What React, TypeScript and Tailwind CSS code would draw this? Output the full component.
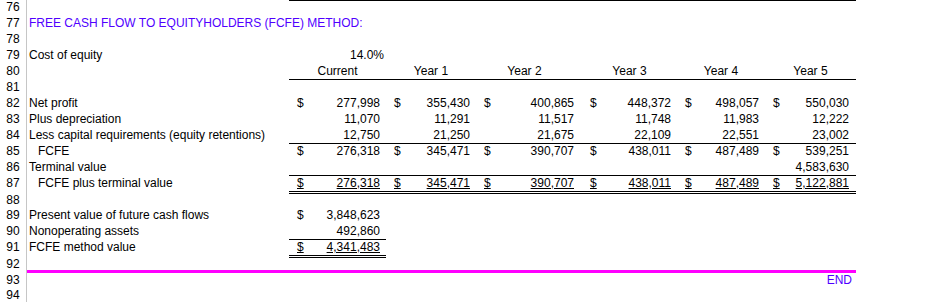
import clsx from "clsx";
import type { ReactNode } from "react";

// Sheet grid: row header | label | Current | Year 1..5 | rest
const GRID =
  "grid grid-cols-[27px_262px_97px_90px_106px_95px_88px_91px_1fr] leading-[15px]";

// right padding of the numbers in each value column
const PAD = ["pr-[6px]", "pr-[6px]", "pr-2", "pr-[6px]", "pr-[6px]", "pr-[7px]"];

type Line = "t" | "b" | "dbl" | undefined;

const LINE: Record<string, string> = {
  t: "border-t border-black",
  b: "border-b border-black",
  dbl: "border-b-[3px] border-double border-black",
};

type Val = { v: string; s?: boolean } | null;

function Cell({ val, i, u, line }: { val: Val; i: number; u?: boolean; line?: Line }) {
  return (
    <div className={clsx("flex justify-between pl-2", PAD[i], line && LINE[line])}>
      <span className={clsx(u && val?.s && "underline underline-offset-1")}>{val?.s ? "$" : ""}</span>
      <span className={clsx(u && "underline underline-offset-1")}>{val?.v ?? ""}</span>
    </div>
  );
}

function Row({
  n,
  label,
  indent,
  vals = [],
  u,
  line,
  onlyC,
  h = "h-4",
}: {
  n: number;
  label?: ReactNode;
  indent?: boolean;
  vals?: Val[];
  u?: boolean;
  line?: Line;
  onlyC?: boolean;
  h?: string;
}) {
  return (
    <div className={clsx(GRID, h)}>
      <div className="border-r border-[#c6c6c6] text-center">{n}</div>
      <div className={clsx("whitespace-nowrap", indent ? "pl-[11px]" : "pl-[2px]")}>{label}</div>
      {[0, 1, 2, 3, 4, 5].map((i) => (
        <Cell key={i} i={i} val={vals[i] ?? null} u={u} line={onlyC && i > 0 ? undefined : line} />
      ))}
      <div />
    </div>
  );
}

const $ = (v: string): Val => ({ v, s: true });
const n = (v: string): Val => ({ v });

export default function App() {
  return (
    <div className="h-[302px] w-[934px] overflow-hidden bg-white font-['Liberation_Sans',Arial,sans-serif] text-[12px] text-black">
      <Row n={76} line="t" />
      <Row n={77} label={<span className="text-[#5000ff]">FREE CASH FLOW TO EQUITYHOLDERS (FCFE) METHOD:</span>} />
      <Row n={78} />
      <div className={clsx(GRID, "h-4")}>
        <div className="border-r border-[#c6c6c6] text-center">79</div>
        <div className="pl-[2px]">Cost of equity</div>
        <div className="pr-[2px] text-right">14.0%</div>
      </div>
      <div className={clsx(GRID, "h-4")}>
        <div className="border-r border-[#c6c6c6] text-center">80</div>
        <div />
        <div className="border-b border-black text-center">Current</div>
        <div className="border-b border-black text-center">Year 1</div>
        <div className="border-b border-black pr-[9px] text-center">Year 2</div>
        <div className="border-b border-black text-center">Year 3</div>
        <div className="border-b border-black text-center">Year 4</div>
        <div className="border-b border-black text-center">Year 5</div>
      </div>
      <Row n={81} />
      <Row
        n={82}
        label="Net profit"
        vals={[$("277,998"), $("355,430"), $("400,865"), $("448,372"), $("498,057"), $("550,030")]}
      />
      <Row
        n={83}
        label="Plus depreciation"
        vals={[n("11,070"), n("11,291"), n("11,517"), n("11,748"), n("11,983"), n("12,222")]}
      />
      <Row
        n={84}
        label="Less capital requirements (equity retentions)"
        line="b"
        vals={[n("12,750"), n("21,250"), n("21,675"), n("22,109"), n("22,551"), n("23,002")]}
      />
      <Row
        n={85}
        label="FCFE"
        indent
        vals={[$("276,318"), $("345,471"), $("390,707"), $("438,011"), $("487,489"), $("539,251")]}
      />
      <Row n={86} label="Terminal value" line="b" vals={[null, null, null, null, null, n("4,583,630")]} />
      <Row
        n={87}
        label="FCFE plus terminal value"
        indent
        u
        line="dbl"
        h="h-[17px]"
        vals={[$("276,318"), $("345,471"), $("390,707"), $("438,011"), $("487,489"), $("5,122,881")]}
      />
      <Row n={88} h="h-[15px]" />
      <Row n={89} label="Present value of future cash flows" vals={[$("3,848,623")]} />
      <Row n={90} label="Nonoperating assets" line="b" onlyC vals={[n("492,860")]} />
      <Row n={91} label="FCFE method value" u line="dbl" onlyC h="h-[17px]" vals={[$("4,341,483")]} />
      <div className={clsx(GRID, "h-4")}>
        <div className="border-r border-[#c6c6c6] text-center">92</div>
        <div className="col-span-7 border-b-[3px] border-[#ff00ff]" />
      </div>
      <div className={clsx(GRID, "h-[15px]")}>
        <div className="border-r border-[#c6c6c6] text-center">93</div>
        <div className="col-span-6" />
        <div className="pr-[4px] text-right text-[#5000ff]">END</div>
      </div>
      <Row n={94} />
    </div>
  );
}
